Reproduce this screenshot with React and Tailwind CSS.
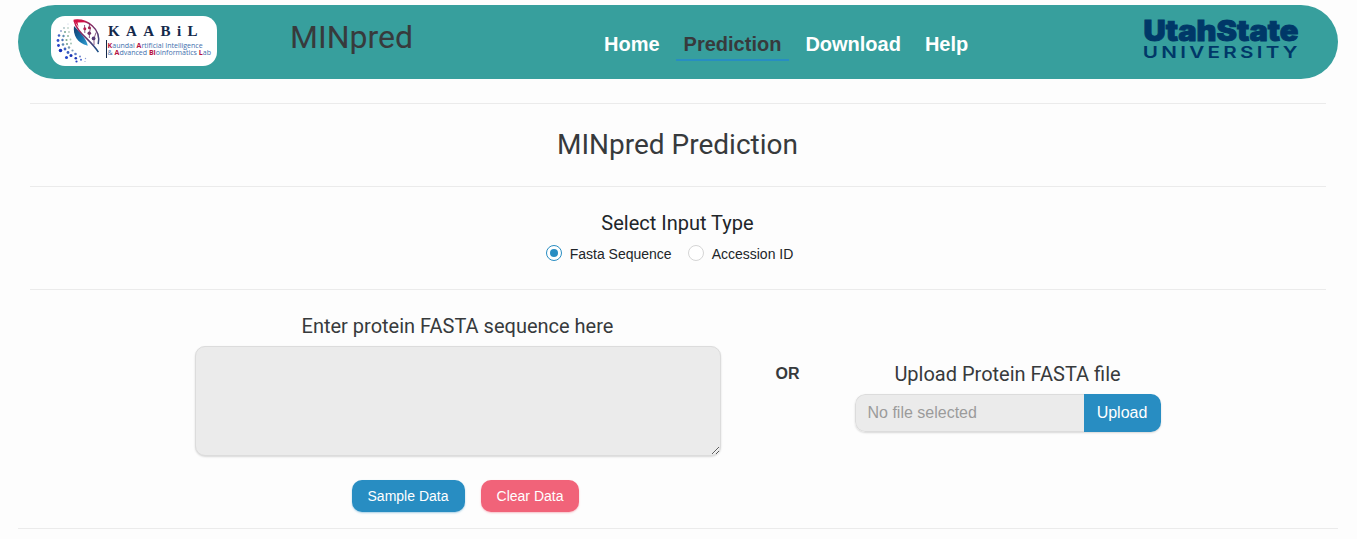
import React from "react";

const DOTS = [
  [68, 24, 0.6, "#b9c4dd"], [64, 28, 0.9, "#a9bfc4"], [68, 28, 0.8, "#9ab9a8"],
  [61, 31, 1, "#8fa3cf"], [65, 32, 1.1, "#7fae98"], [69, 32, 0.9, "#b5c9bd"],
  [59, 35.5, 1.3, "#3f5fc4"], [63.5, 36, 1.2, "#5d8fae"], [68, 36, 1, "#8fb79e"],
  [58, 40.5, 1.4, "#3050c8"], [62.5, 40, 1.2, "#4a72b8"], [66.5, 40, 1.1, "#7fae8c"], [70.5, 39.5, 0.9, "#a9c9b2"],
  [58.5, 45.5, 1.4, "#2340c4"], [63, 44.5, 1.3, "#5a86b4"], [67, 44, 1.1, "#78a594"], [71, 43.5, 1, "#a5c4b8"],
  [60.5, 50.5, 1.8, "#1430b8"], [65, 49, 1.4, "#3e62c0"], [69, 47.5, 1.2, "#7898b0"],
  [66.5, 57.5, 1.5, "#2344c8"], [68, 52.5, 1.4, "#3c5fc0"], [72.5, 50.5, 1.1, "#7d9cb8"],
  [71, 55.5, 1.5, "#1a34b4"], [75.5, 54, 1.3, "#5d7cc8"],
  [75.8, 58.3, 1.3, "#1a34b4"], [80, 56.5, 1.1, "#7f93cf"],
  [76.5, 61.5, 1.1, "#2340c4"], [81, 59.8, 1, "#4b66cc"], [85.5, 58.5, 0.7, "#8f9fd8"], [85, 61.5, 0.6, "#8f9fd8"],
];

function KaabilLogo() {
  return (
    <svg className="h-[50px] w-[166px] rounded-[14px] bg-white" viewBox="51 16 166 50">
      <defs>
        <linearGradient id="wing" gradientUnits="userSpaceOnUse" x1="74" y1="20" x2="98" y2="50">
          <stop offset="0" stopColor="#d31245" />
          <stop offset="0.45" stopColor="#7c3068" />
          <stop offset="1" stopColor="#1c4f86" />
        </linearGradient>
        <linearGradient id="leaf" x1="0" y1="0" x2="1" y2="1">
          <stop offset="0" stopColor="#153a6c" />
          <stop offset="0.6" stopColor="#1473ad" />
          <stop offset="1" stopColor="#3a9fd0" />
        </linearGradient>
      </defs>
      {DOTS.map(([x, y, r, fill]) => (
        <circle key={`${x}-${y}`} cx={x} cy={y} r={r} fill={fill} />
      ))}
      <path d="M74 26C72.8 35 77 43 87.8 45.7C86.5 39 80.5 32.5 74 26Z" fill="url(#leaf)" />
      <path d="M74.2 20.8C77 33 90 39 98.4 52.2" fill="none" stroke="url(#wing)" strokeWidth="1.5" />
      <path d="M73.6 20.4C87 18.5 101.5 28.5 98.2 44.2" fill="none" stroke="url(#wing)" strokeWidth="1.5" />
      <path d="M73.6 20C79 19.5 83 20.4 86.5 22.2L77.5 22.5L78.6 27Z" fill="#d31245" />
      <path d="M89.4 23.5V28M84.6 25V29M96 32.5L94.2 38M90.5 28L89.4 33M84.8 29V33M89.4 33V38M94 38V45" fill="none" stroke="#703467" strokeWidth="0.8" />
      <circle cx="89.4" cy="27.8" r="1.5" fill="#a0244f" />
      <circle cx="84.8" cy="28.8" r="1.5" fill="#b92350" />
      <circle cx="89.3" cy="33.2" r="1.8" fill="#712f68" />
      <circle cx="93.6" cy="38.4" r="1.9" fill="#553b76" />
      <text x="108" y="35.5" fontFamily="'Liberation Serif', serif" fontWeight="700" fontSize="15" fill="#14294b" textLength="89.5" lengthAdjust="spacing">KAABiL</text>
      <path d="M106.5 40V58" stroke="#14294b" strokeWidth="1" />
      <g fontFamily="'Open Sans', sans-serif" fontSize="7.7" fill="#3f6fae">
        <text x="107.6" y="48.2" textLength="95" lengthAdjust="spacingAndGlyphs">
          <tspan fill="#b5123f" fontWeight="700">K</tspan>aundal <tspan fill="#b5123f" fontWeight="700">A</tspan>rtificial Intelligence
        </text>
        <text x="107.6" y="55.4" textLength="103.4" lengthAdjust="spacingAndGlyphs">
          &amp; <tspan fill="#b5123f" fontWeight="700">A</tspan>dvanced <tspan fill="#b5123f" fontWeight="700">Bi</tspan>oinformatics <tspan fill="#b5123f" fontWeight="700">L</tspan>ab
        </text>
      </g>
    </svg>
  );
}

function UniversityLogo() {
  return (
    <svg className="h-[44px] w-[158px] overflow-visible" viewBox="1142 16 158 44" fill="#003868">
      <text x="1143.5" y="40.6" fontFamily="Inter, sans-serif" fontWeight="900" fontSize="28.5" stroke="#003868" strokeWidth="0.9" textLength="155" lengthAdjust="spacingAndGlyphs">UtahState</text>
      <text x="1142.8" y="57.6" fontFamily="Inter, sans-serif" fontWeight="600" fontSize="16.4" letterSpacing="2.6" textLength="158" lengthAdjust="spacingAndGlyphs">UNIVERSITY</text>
    </svg>
  );
}

function NavItem({ label, active }) {
  return (
    <a className={`border-b-2 px-2 ${active ? "border-[#288dc2] text-[#373a3c]" : "border-transparent text-white"}`}>
      {label}
    </a>
  );
}

function Radio({ label, checked }) {
  return (
    <label className="flex items-start">
      <span className={`mr-2 flex size-4 items-center justify-center rounded-full border bg-white ${checked ? "border-[#288dc2]" : "border-[#d5d5d5]"}`}>
        {checked && <span className="size-2 rounded-full bg-[#288dc2]" />}
      </span>
      <span className="leading-[18px]">{label}</span>
    </label>
  );
}

export default function App() {
  return (
    <div className="h-[539px] overflow-hidden bg-[#fdfdfd] pr-[19px] pl-[18px] pt-[5px] font-['Liberation_Sans',Arial,sans-serif] text-[#373a3c]">
      <header className="flex h-[74px] items-start rounded-[37px] bg-[#379f9d] pl-[33px]">
        <div className="mt-[11px] w-[239px]">
          <KaabilLogo />
        </div>
        <h1 className="mt-[10px] w-[306px] font-['Roboto',sans-serif] text-[32px] leading-[44px]">MINpred</h1>
        <nav className="mt-[24px] flex gap-2 text-[20px] leading-[30px] font-bold">
          <NavItem label="Home" />
          <NavItem label="Prediction" active />
          <NavItem label="Download" />
          <NavItem label="Help" />
        </nav>
        <div className="mt-[11px] mr-[38px] ml-auto">
          <UniversityLogo />
        </div>
      </header>

      <main className="pt-6">
        <div className="mx-3 border-t border-[#ebebeb]">
          <h2 className="flex h-[82px] items-center justify-center pr-px font-['Roboto',sans-serif] text-[28px]">MINpred Prediction</h2>
        </div>
        <div className="mx-3 flex h-[103px] flex-col items-center border-t border-[#ebebeb] pt-[24px] text-[#212529]">
          <h3 className="pr-px font-['Roboto',sans-serif] text-[20px] leading-6">Select Input Type</h3>
          <div className="mt-[10px] mr-[17px] flex gap-4 text-[14px]">
            <Radio label="Fasta Sequence" checked />
            <Radio label="Accession ID" />
          </div>
        </div>
        <div className="mx-3 flex h-[239px] border-t border-[#ebebeb] pl-[165px]">
          <section className="flex w-[526px] flex-col items-center pt-6">
            <h4 className="pr-px font-['Roboto',sans-serif] text-[20px] leading-6">Enter protein FASTA sequence here</h4>
            <textarea className="mt-2 h-[110px] w-full resize rounded-[10px] border border-[#dcdcdc] bg-[#ebebeb] shadow-[0_1px_2px_rgba(0,0,0,0.15)] outline-none" />
            <div className="mt-6 ml-[15px] flex gap-4 text-[14px] text-white">
              <button className="h-8 w-[113px] rounded-[10px] bg-[#288dc2] pr-px shadow-[0_1px_2px_rgba(40,141,194,0.4)]">Sample Data</button>
              <button className="h-8 w-[98px] rounded-[10px] bg-[#f16379] shadow-[0_1px_2px_rgba(241,99,121,0.4)]">Clear Data</button>
            </div>
          </section>
          <p className="w-[134px] pt-[72px] pr-px text-center text-[16px] leading-6 font-bold">OR</p>
          <section className="flex w-[306px] flex-col items-center pt-[72px]">
            <h4 className="pr-px font-['Roboto',sans-serif] text-[20px] leading-6">Upload Protein FASTA file</h4>
            <div className="mt-2 flex h-[38px] w-full overflow-hidden rounded-[10px] text-[16px] shadow-[0_1px_2px_rgba(0,0,0,0.15)]">
              <span className="flex flex-1 items-center rounded-l-[10px] border border-r-0 border-[#dcdcdc] bg-[#ebebeb] pl-[11.5px] text-[#9b9b9b]">No file selected</span>
              <button className="w-[77px] bg-[#288dc2] pr-px text-white">Upload</button>
            </div>
          </section>
        </div>
        <div className="border-t border-[#ebebeb]" />
      </main>
    </div>
  );
}
